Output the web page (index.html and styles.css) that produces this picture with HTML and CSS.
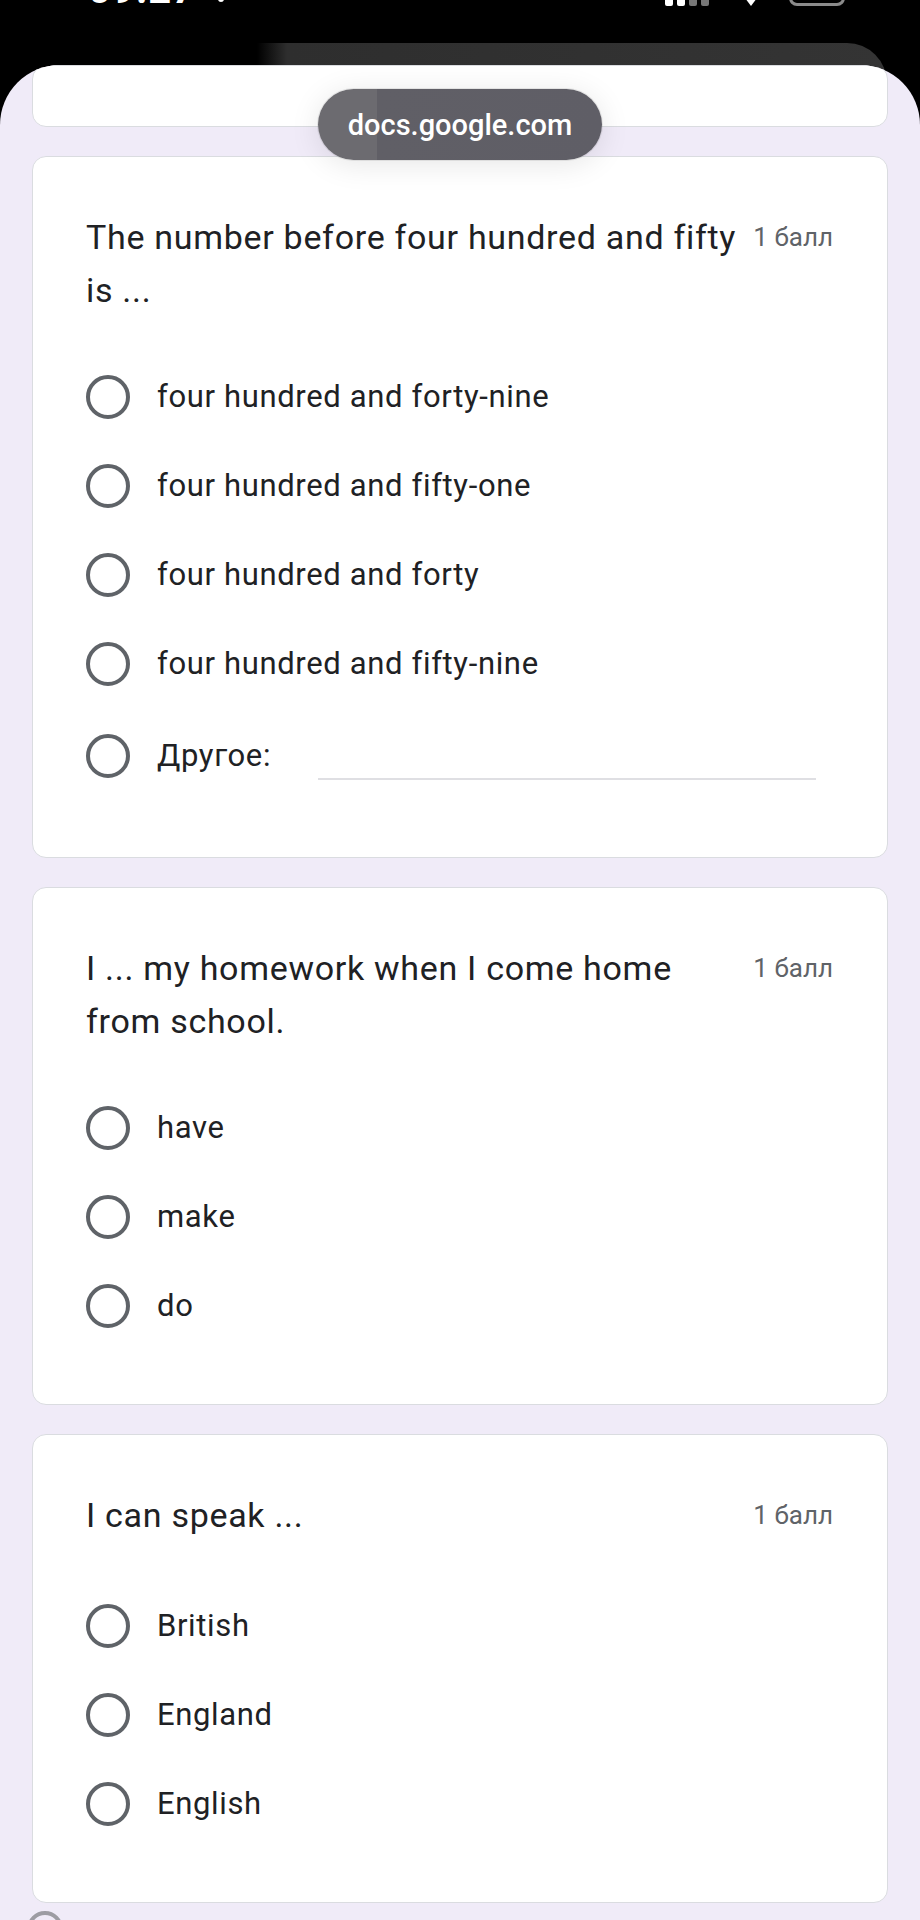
FILE: index.html
```html
<!DOCTYPE html>
<html lang="ru">
<head>
<meta charset="utf-8">
<title>Тест</title>
<link rel="stylesheet" href="styles.css">
</head>
<body>
  <div class="status">
    <div class="status-left">
      <span class="clock">09:27</span>
      <svg class="st-icon" width="22" height="30" viewBox="0 0 22 30"><path d="M11 2 C5 2 4 8 4 14 L2 22 H20 L18 14 C18 8 17 2 11 2 Z M8 24 H14 A3 3 0 0 1 8 24 Z" fill="#fff"/></svg>
    </div>
    <div class="status-right">
      <svg width="50" height="30" viewBox="0 0 50 30"><rect x="2" y="6" width="8" height="24" rx="2" fill="#fff"/><rect x="14" y="6" width="8" height="24" rx="2" fill="#fff"/><rect x="26" y="6" width="8" height="24" rx="2" fill="#777"/><rect x="38" y="6" width="8" height="24" rx="2" fill="#777"/></svg>
      <svg width="16" height="30" viewBox="0 0 16 30"><path d="M8 30 L2 22 H14 Z" fill="#fff"/></svg>
      <div class="battery"></div>
    </div>
  </div>

  <div class="backdrop"><div class="ghost-tab"></div></div>

  <main class="sheet">
    <div class="toast">docs.google.com</div>

    <div class="card card-stub"></div>

    <section class="card">
      <div class="q-head">
        <h2 class="q-title">The number before four hundred and fifty is ...</h2>
        <span class="points">1 балл</span>
      </div>
      <div class="options">
        <label class="option"><span class="radio"></span><span class="opt-text">four hundred and forty-nine</span></label>
        <label class="option"><span class="radio"></span><span class="opt-text">four hundred and fifty-one</span></label>
        <label class="option"><span class="radio"></span><span class="opt-text">four hundred and forty</span></label>
        <label class="option"><span class="radio"></span><span class="opt-text">four hundred and fifty-nine</span></label>
        <label class="option option-other"><span class="radio"></span><span class="opt-text">Другое:</span><span class="other-input"></span></label>
      </div>
    </section>

    <section class="card">
      <div class="q-head">
        <h2 class="q-title">I ... my homework when I come home from school.</h2>
        <span class="points">1 балл</span>
      </div>
      <div class="options">
        <label class="option"><span class="radio"></span><span class="opt-text">have</span></label>
        <label class="option"><span class="radio"></span><span class="opt-text">make</span></label>
        <label class="option"><span class="radio"></span><span class="opt-text">do</span></label>
      </div>
    </section>

    <section class="card">
      <div class="q-head">
        <h2 class="q-title">I can speak ...</h2>
        <span class="points">1 балл</span>
      </div>
      <div class="options">
        <label class="option"><span class="radio"></span><span class="opt-text">British</span></label>
        <label class="option"><span class="radio"></span><span class="opt-text">England</span></label>
        <label class="option"><span class="radio"></span><span class="opt-text">English</span></label>
      </div>
    </section>

    <div class="fab-ring"></div>
  </main>
</body>
</html>
```

FILE: styles.css
```css
* { box-sizing: border-box; }

html, body {
  margin: 0;
  padding: 0;
  background: #000;
  font-family: Roboto, "Noto Sans", Arial, sans-serif;
  color: #202124;
}

/* Phone status bar: only the lower edge of its glyphs is visible */
.status {
  height: 43px;
  overflow: hidden;
  display: flex;
  justify-content: space-between;
  align-items: flex-start;
  padding: 0 75px 0 88px;
}
.status-left,
.status-right {
  display: flex;
  align-items: flex-end;
  gap: 14px;
  margin-top: -25px;
}
.clock {
  color: #fff;
  font-size: 40px;
  font-weight: 700;
  line-height: 30px;
  letter-spacing: 1px;
}
.status-right { gap: 30px; margin-top: -24px; }
.battery {
  width: 56px;
  height: 30px;
  border: 3px solid #8a8a8a;
  border-radius: 8px;
}

/* Dimmed browser tab peeking behind the page */
.backdrop {
  height: 22px;
  display: flex;
}
.ghost-tab {
  margin-left: 257px;
  width: 630px;
  height: 40px;
  background: linear-gradient(to right, #000 0, #2e2e2e 30px, #343434 100%);
  border-radius: 0 46px 0 0;
}

.sheet {
  position: relative;
  z-index: 1;
  background: #f0ebf8;
  border-radius: 60px 60px 0 0;
  overflow: hidden;
  padding: 0 32px;
  display: flex;
  flex-direction: column;
  gap: 29px;
  min-height: 1900px;
}

.toast {
  position: absolute;
  top: 24px;
  left: 318px;
  width: 284px;
  height: 71px;
  border-radius: 36px;
  background: linear-gradient(to right, #6c6b70 0, #6c6b70 59px, #605f66 59px, #5f5e66 100%);
  color: #fff;
  font-size: 29px;
  font-weight: 500;
  display: flex;
  align-items: center;
  justify-content: center;
  box-shadow: 0 0 0 1px rgba(0, 0, 0, 0.08), 0 4px 30px rgba(0, 0, 0, 0.10);
  z-index: 2;
}

.card {
  background: #fff;
  border: 1px solid #dadce0;
  border-radius: 14px;
  padding: 54px 54px 54px 53px;
}
.card-stub {
  height: 62px;
  padding: 0;
  flex: none;
}

.q-head {
  display: flex;
  align-items: flex-start;
  justify-content: space-between;
  min-height: 57px;
}
.q-title {
  flex: 0 0 660px;
  margin: 0;
  font-size: 34px;
  font-weight: 400;
  letter-spacing: 0.7px;
  line-height: 53px;
  color: #202124;
}
.points {
  font-size: 26px;
  line-height: 53px;
  color: #5f6368;
  white-space: nowrap;
}

.options {
  margin-top: 35px;
  display: flex;
  flex-direction: column;
}
.option {
  height: 89px;
  display: flex;
  align-items: center;
  gap: 27px;
  font-size: 31px;
  letter-spacing: 0.65px;
  color: #202124;
}
.radio {
  flex: none;
  width: 44px;
  height: 44px;
  border: 4px solid #5f6368;
  border-radius: 50%;
}
.option-other { height: 95px; }
.other-input {
  flex: 1;
  align-self: center;
  margin: 46px 17px 0 20px;
  border-bottom: 2px solid #dfdfe3;
}

.fab-ring {
  flex: none;
  width: 36px;
  height: 36px;
  margin: -21px 0 0 -5px;
  border: 4px solid #9d9ca3;
  border-radius: 50%;
}
```
